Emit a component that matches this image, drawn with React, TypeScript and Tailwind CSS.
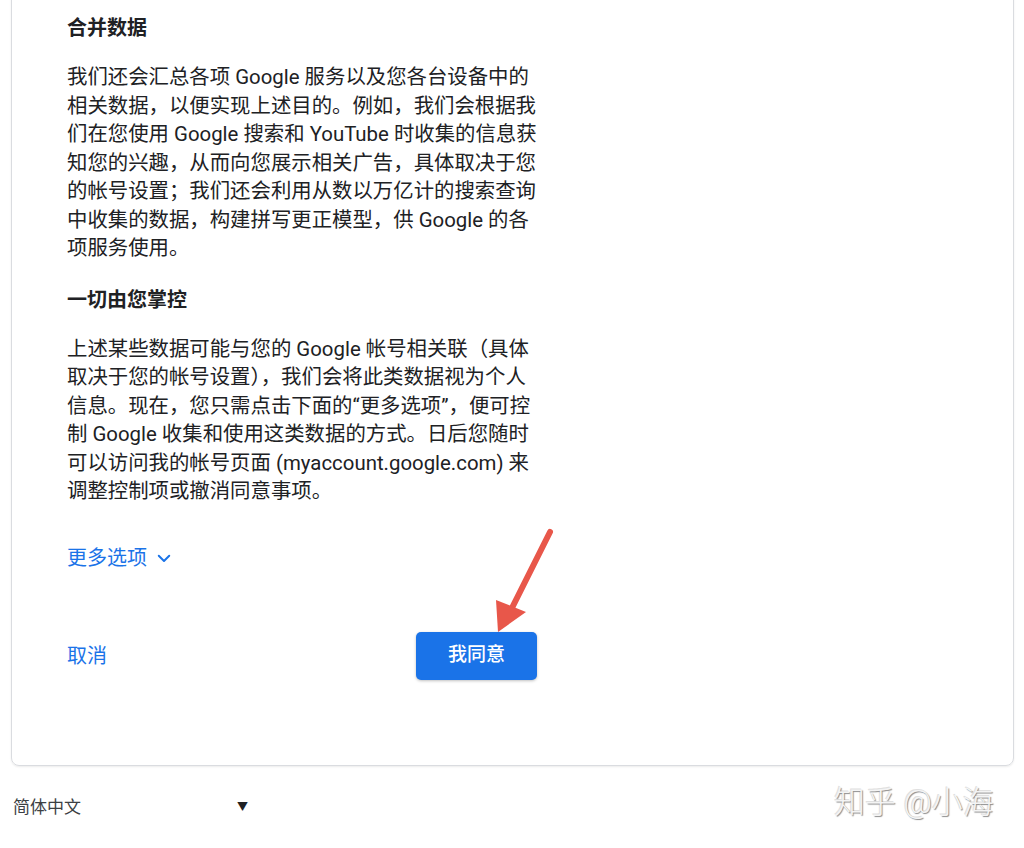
const para1 = [
  "我们还会汇总各项 Google 服务以及您各台设备中的",
  "相关数据，以便实现上述目的。例如，我们会根据我",
  "们在您使用 Google 搜索和 YouTube 时收集的信息获",
  "知您的兴趣，从而向您展示相关广告，具体取决于您",
  "的帐号设置；我们还会利用从数以万亿计的搜索查询",
  "中收集的数据，构建拼写更正模型，供 Google 的各",
  "项服务使用。",
];

const para2 = [
  "上述某些数据可能与您的 Google 帐号相关联（具体",
  "取决于您的帐号设置），我们会将此类数据视为个人",
  "信息。现在，您只需点击下面的“更多选项”，便可控",
  "制 Google 收集和使用这类数据的方式。日后您随时",
  "可以访问我的帐号页面 (myaccount.google.com) 来",
  "调整控制项或撤消同意事项。",
];

function Lines({ lines }: { lines: string[] }) {
  return (
    <div className="text-[20.4px] leading-[28.5px] text-[#202124]">
      {lines.map((l) => (
        <div key={l} className="whitespace-nowrap">
          {l}
        </div>
      ))}
    </div>
  );
}

export default function App() {
  return (
    <div className="relative w-[1024px] h-[848px] overflow-hidden bg-white font-['Roboto','Noto_Sans_CJK_SC',sans-serif]">
      <div className="ml-[11px] w-[1003px] -mt-[10px] h-[776px] rounded-lg border border-[#dadce0] shadow-[0_1px_2px_rgba(0,0,0,0.08)] pl-[55px] pt-[23px]">
        <h2 className="text-[20px] leading-[28px] font-semibold text-[#202124]">合并数据</h2>
        <div className="mt-[21px]">
          <Lines lines={para1} />
        </div>
        <h2 className="mt-[23px] text-[20px] leading-[28px] font-semibold text-[#202124]">一切由您掌控</h2>
        <div className="mt-[21px]">
          <Lines lines={para2} />
        </div>
        <div className="mt-[38px] flex items-center gap-[8px] text-[20px] leading-[28px] text-[#1a73e8]">
          <span>更多选项</span>
          <svg width="18" height="18" viewBox="0 0 24 24" fill="none" stroke="#1a73e8" strokeWidth="2.6" strokeLinecap="round" strokeLinejoin="round">
            <path d="M5 9l7 7 7-7" />
          </svg>
        </div>
        <div className="mt-[60px] flex w-[470px] items-center justify-between">
          <span className="text-[20px] leading-[28px] text-[#1a73e8]">取消</span>
          <button className="h-[48px] w-[121px] rounded-[5px] bg-[#1a73e8] text-[19px] font-medium text-white shadow-[0_1px_3px_rgba(0,0,0,0.25)]">
            我同意
          </button>
        </div>
      </div>

      <div className="mt-[29px] flex items-center pl-[13px] text-[17px] text-[#3c4043]">
        <span className="w-[224px]">简体中文</span>
        <span className="text-[11px] text-[#202124]">▼</span>
      </div>

      <div className="absolute left-[834px] top-[784px] text-[31px] leading-[38px] font-light text-[#f4f4f4] [text-shadow:1px_1px_1px_#8a8a8a,-1px_-1px_0_#e0e0e0]">
        知乎 @小海
      </div>

      <svg className="absolute left-[490px] top-[520px]" width="80" height="120" viewBox="0 0 80 120">
        <line x1="60" y1="12" x2="20" y2="92" stroke="#e8574a" strokeWidth="6" strokeLinecap="round" />
        <polygon points="8,112 6,80 36,92" fill="#e8574a" />
      </svg>
    </div>
  );
}
